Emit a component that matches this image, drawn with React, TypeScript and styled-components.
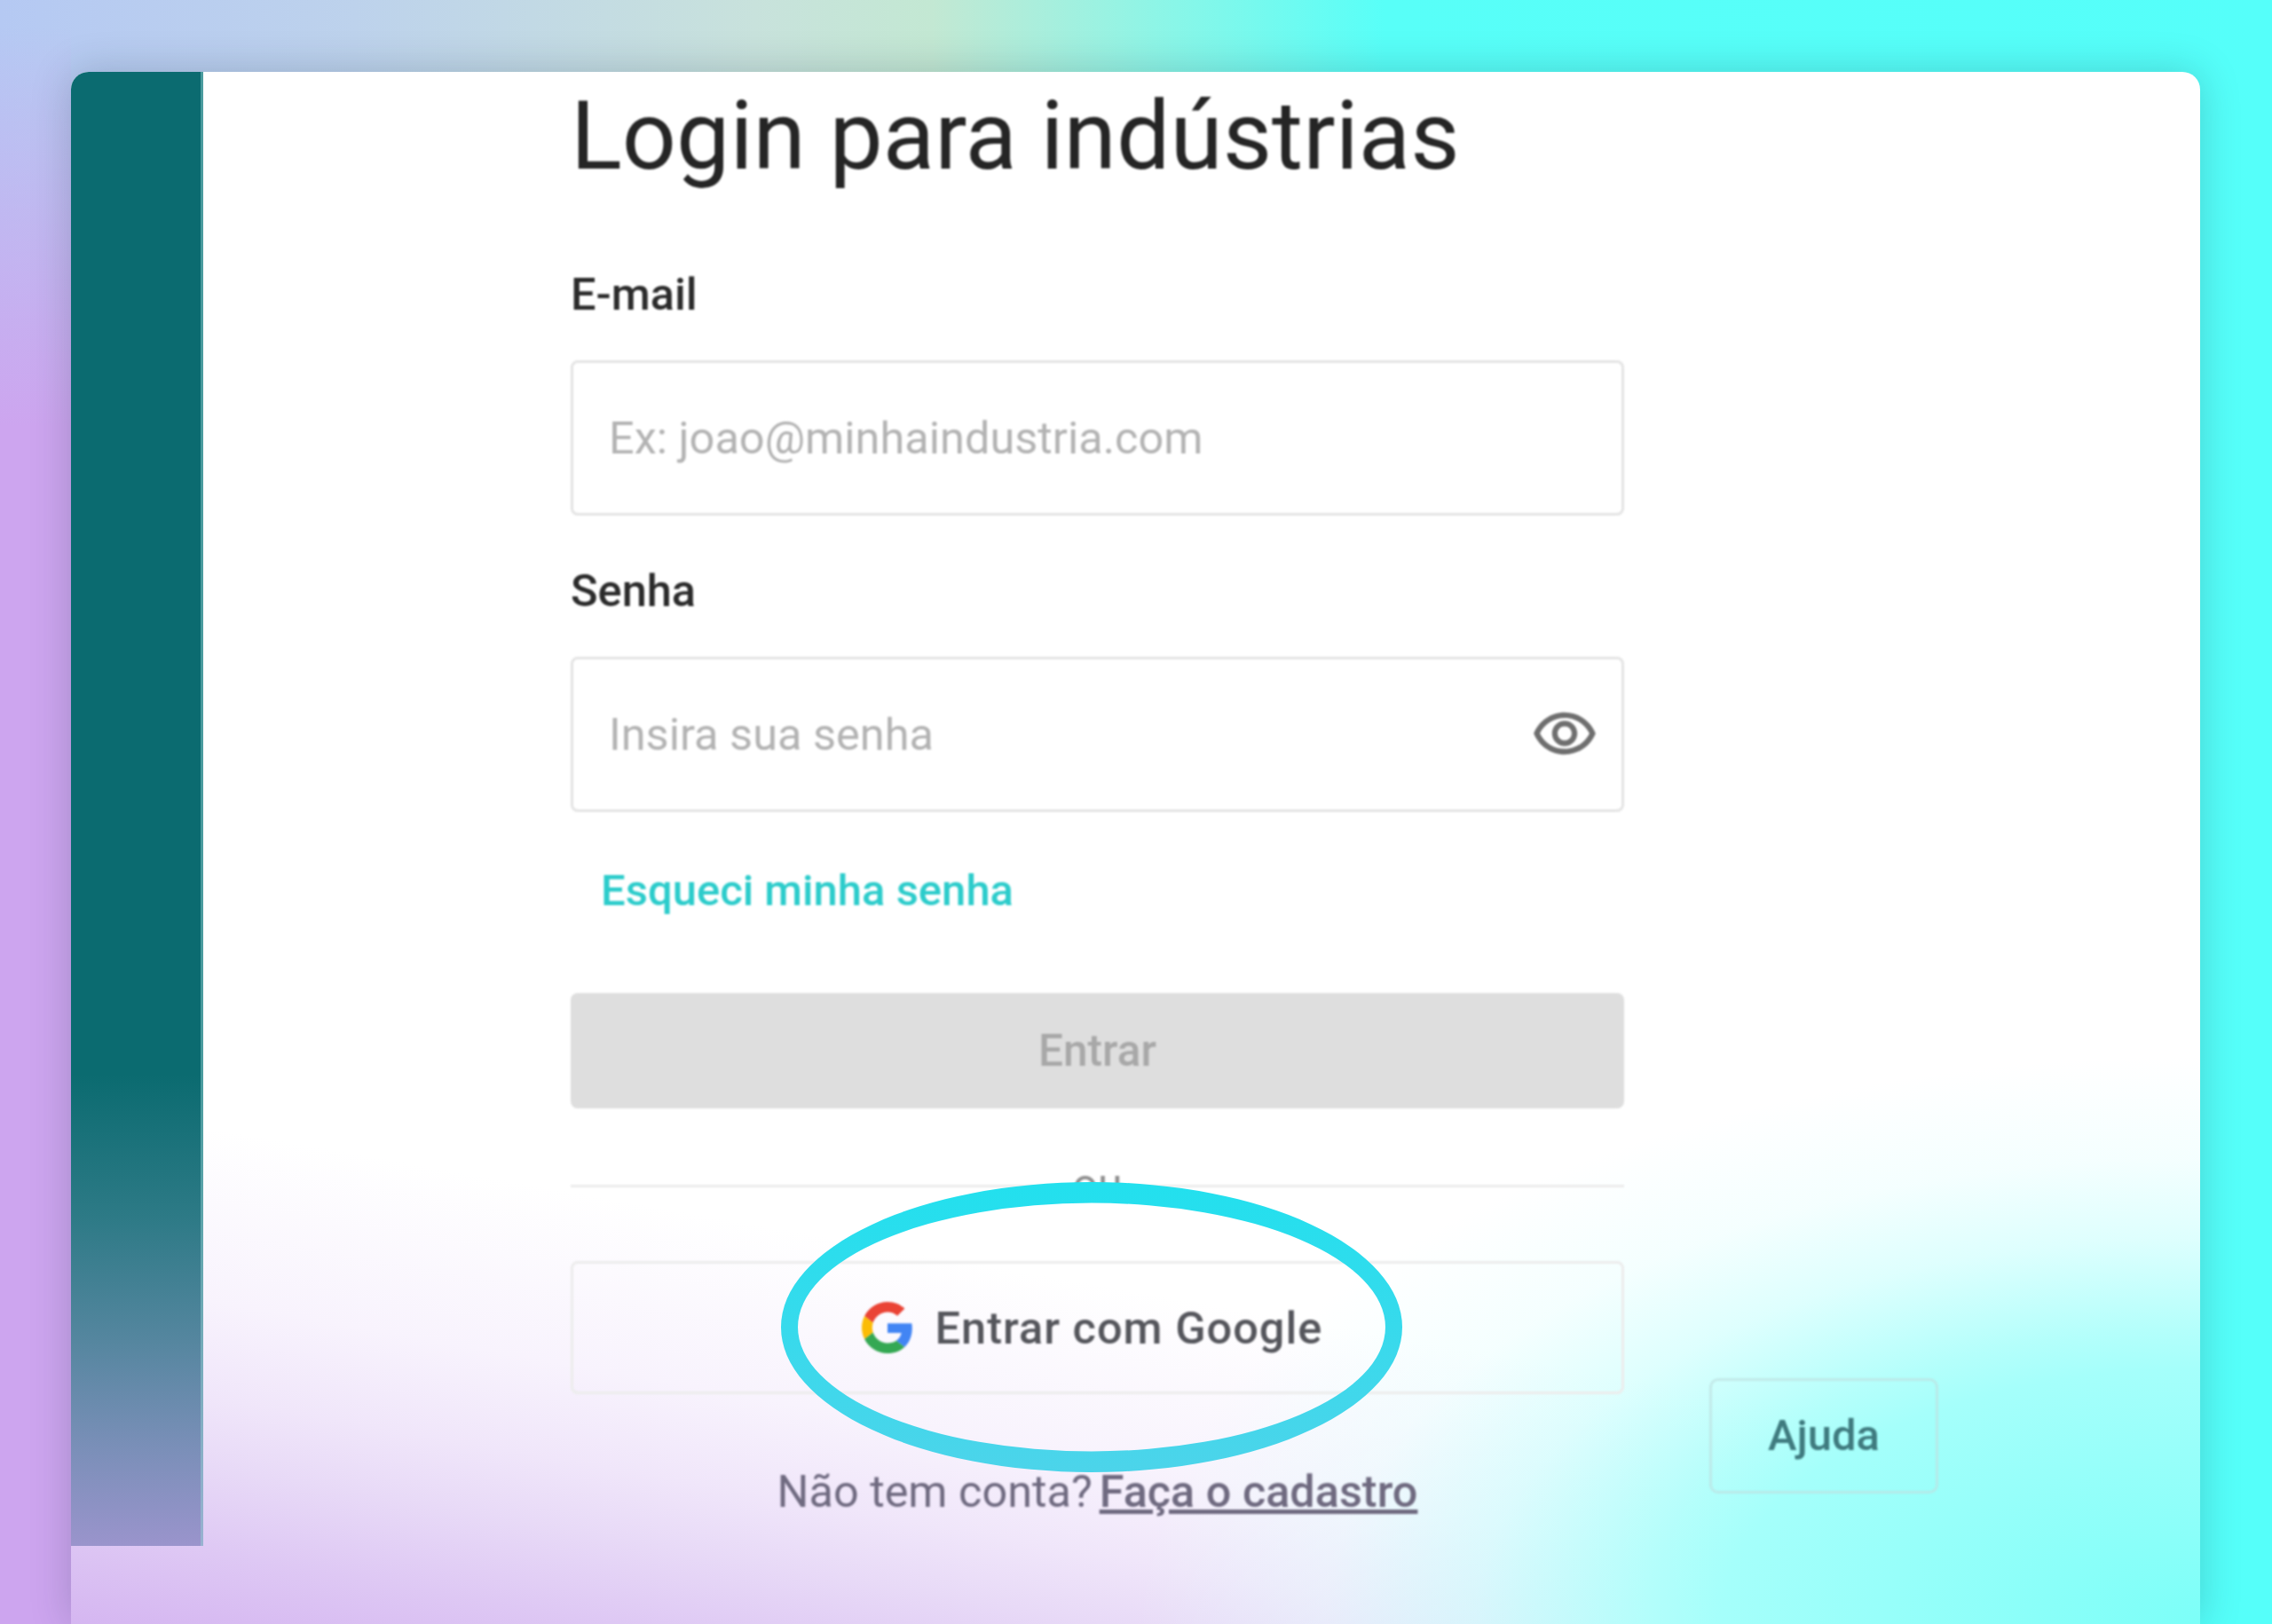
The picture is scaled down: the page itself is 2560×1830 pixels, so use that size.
import React from "react";
import styled, { createGlobalStyle } from "styled-components";

const Global = createGlobalStyle`
  html, body { margin: 0; padding: 0; }
  body { font-family: Roboto, "Liberation Sans", sans-serif; }
  * { box-sizing: border-box; }
`;

const Page = styled.div`
  width: 2560px;
  height: 1830px;
  overflow: hidden;
  padding: 81px 81px 0 80px;
  background:
    linear-gradient(180deg, rgba(205, 165, 239, 0) 30px, #cda5ef 480px) 0 0 / 80px 100% no-repeat,
    linear-gradient(90deg, #b5c9f3 0, #bdd2ec 400px, #c8e2dc 850px, #c3e8d3 1050px, #8ef5e6 1300px, #58fff8 1560px, #55fffa 100%);
`;

const Card = styled.main`
  position: relative;
  height: 1749px;
  display: flex;
  align-items: flex-start;
  border-radius: 20px 20px 0 0;
  box-shadow: 0 0 46px rgba(20, 40, 60, 0.22);
  background:
    radial-gradient(ellipse 1200px 640px at 100% 100%, rgba(124, 255, 248, 1) 0, rgba(165, 255, 251, 1) 45%, rgba(176, 255, 251, 0.95) 52%, rgba(200, 255, 253, 0.6) 68%, rgba(225, 255, 254, 0.35) 82%, rgba(240, 255, 255, 0) 100%),
    linear-gradient(190deg, rgba(246, 239, 252, 0) 73%, #f8f3fd 82%, #f0e6fa 87%, #e8daf7 90.5%, #dec8f4 95%, #d5b6f1 100%),
    #fff;
`;

const Sidebar = styled.aside`
  width: 149px;
  height: 1661px;
  flex: none;
  border-radius: 20px 0 0 0;
  border-right: 3px solid rgba(150, 215, 215, 0.45);
  background: linear-gradient(180deg, #0b6b70 0, #0b6b70 1130px, #2d7a86 1290px, #55869f 1430px, #7a8fb8 1550px, #9a94cc 100%);
`;

const Form = styled.section`
  width: 1187px;
  margin-left: 414px;
  display: flex;
  flex-direction: column;
  filter: blur(0.9px);
`;

const Title = styled.h1`
  margin: 13px 0 0;
  height: 118px;
  font-size: 107.4px;
  line-height: 118px;
  font-weight: 400;
  color: #252525;
  white-space: nowrap;
`;

const Label = styled.label`
  display: block;
  height: 56px;
  line-height: 56px;
  font-size: 50.5px;
  font-weight: 500;
  color: #2b2b2b;
  margin-top: ${(p: { $top: number }) => p.$top}px;
`;

const FieldBox = styled.div`
  height: 175px;
  margin-top: 46px;
  display: flex;
  align-items: center;
  padding: 0 26px 0 40px;
  border: 3px solid #e4e4e4;
  border-radius: 8px;
  background: #fff;
`;

const Field = styled.input`
  flex: 1;
  min-width: 0;
  border: 0;
  outline: 0;
  padding: 0;
  background: transparent;
  font: 400 50.5px Roboto, sans-serif;
  color: #333;
  &::placeholder { color: #b3b3b3; opacity: 1; }
`;

const EyeIcon = styled.svg`
  width: 76px;
  height: 76px;
  flex: none;
  fill: #6f6f6f;
`;

const Forgot = styled.a`
  display: block;
  margin: 59px 0 0 34px;
  height: 60px;
  line-height: 60px;
  font-size: 49px;
  font-weight: 500;
  color: #2ccccb;
`;

const Primary = styled.button`
  height: 130px;
  margin-top: 85px;
  border: 0;
  border-radius: 8px;
  background: #dedede;
  font: 500 49.5px Roboto, sans-serif;
  color: #a8a8a8;
`;

const Divider = styled.div`
  position: relative;
  height: 3px;
  margin-top: 86px;
  background: #ececec;
`;

const DividerWord = styled.span`
  position: absolute;
  left: 50%;
  top: -30px;
  transform: translateX(-50%);
  font-size: 50px;
  line-height: 60px;
  color: #8f8f8f;
`;

const GoogleButton = styled.button`
  height: 150px;
  margin-top: 83px;
  padding: 0 12px 0 0;
  display: flex;
  align-items: center;
  justify-content: center;
  gap: 25px;
  border: 3px solid #ececec;
  border-radius: 8px;
  background: transparent;
  font: 500 50.5px Roboto, sans-serif;
  letter-spacing: 1px;
  color: #55565c;
`;

const GoogleMark = styled.svg`
  width: 58px;
  height: 58px;
  flex: none;
`;

const SignupLine = styled.p`
  margin: 80px 0 0;
  height: 60px;
  line-height: 60px;
  text-align: center;
  font-size: 50.4px;
  color: #6f6a80;
`;

const SignupLink = styled.a`
  margin-left: 8px;
  color: #6f6a80;
  font-weight: 500;
  text-decoration: underline;
`;

const HelpButton = styled.button`
  position: absolute;
  left: 1846px;
  top: 1472px;
  width: 258px;
  height: 130px;
  padding: 0 0 2px;
  border: 3px solid rgba(190, 225, 225, 0.7);
  border-radius: 10px;
  background: transparent;
  font: 500 49px Roboto, sans-serif;
  color: #3f7b7f;
  filter: blur(0.9px);
`;

const Ring = styled.svg`
  position: absolute;
  left: 800px;
  top: 1251px;
  width: 700px;
  height: 327px;
  overflow: visible;
`;

const GoogleG = () => (
  <GoogleMark viewBox="0 0 48 48">
    <path fill="#EA4335" d="M24 9.5c3.54 0 6.71 1.22 9.21 3.6l6.85-6.85C35.9 2.38 30.47 0 24 0 14.62 0 6.51 5.38 2.56 13.22l7.98 6.19C12.43 13.72 17.74 9.5 24 9.5z" />
    <path fill="#4285F4" d="M46.98 24.55c0-1.57-.15-3.09-.38-4.55H24v9.02h12.94c-.58 2.96-2.26 5.48-4.78 7.18l7.73 6c4.51-4.18 7.09-10.36 7.09-17.65z" />
    <path fill="#FBBC05" d="M10.53 28.59c-.48-1.45-.76-2.99-.76-4.59s.27-3.14.76-4.59l-7.98-6.19C.92 16.46 0 20.12 0 24c0 3.88.92 7.54 2.56 10.78l7.97-6.19z" />
    <path fill="#34A853" d="M24 48c6.48 0 11.93-2.13 15.89-5.81l-7.73-6c-2.15 1.45-4.92 2.3-8.16 2.3-6.26 0-11.57-4.22-13.47-9.91l-7.98 6.19C6.51 42.62 14.62 48 24 48z" />
  </GoogleMark>
);

export default function App() {
  return (
    <Page>
      <Global />
      <Card>
        <Sidebar />
        <Form>
          <Title>Login para indústrias</Title>
          <Label $top={92}>E-mail</Label>
          <FieldBox>
            <Field placeholder="Ex: joao@minhaindustria.com" />
          </FieldBox>
          <Label $top={57}>Senha</Label>
          <FieldBox>
            <Field placeholder="Insira sua senha" />
            <EyeIcon viewBox="0 0 24 24">
              <path d="M12 6c3.79 0 7.17 2.13 8.82 5.5C19.17 14.87 15.79 17 12 17s-7.17-2.13-8.82-5.5C4.83 8.13 8.21 6 12 6m0-2C7 4 2.73 7.11 1 11.5 2.73 15.89 7 19 12 19s9.27-3.11 11-7.5C21.27 7.11 17 4 12 4zm0 5c1.38 0 2.5 1.12 2.5 2.5S13.38 14 12 14s-2.5-1.12-2.5-2.5S10.62 9 12 9m0-2c-2.48 0-4.5 2.02-4.5 4.5S9.52 16 12 16s4.5-2.02 4.5-4.5S14.48 7 12 7z" />
            </EyeIcon>
          </FieldBox>
          <Forgot>Esqueci minha senha</Forgot>
          <Primary>Entrar</Primary>
          <Divider>
            <DividerWord>ou</DividerWord>
          </Divider>
          <GoogleButton>
            <GoogleG />
            Entrar com Google
          </GoogleButton>
          <SignupLine>
            Não tem conta?<SignupLink>Faça o cadastro</SignupLink>
          </SignupLine>
        </Form>
        <HelpButton>Ajuda</HelpButton>
        <Ring viewBox="0 0 700 327">
          <defs>
            <linearGradient id="ringFill" x1="0" y1="0" x2="0" y2="1">
              <stop offset="0" stopColor="#22e0ee" />
              <stop offset="1" stopColor="#4cd4ea" />
            </linearGradient>
          </defs>
          <path
            fill="url(#ringFill)"
            fillRule="evenodd"
            d="M0 163.5a350 163.5 0 1 0 700 0a350 163.5 0 1 0 -700 0zM19 163.5a331 140 0 1 1 662 0a331 140 0 1 1 -662 0z"
          />
        </Ring>
      </Card>
    </Page>
  );
}
